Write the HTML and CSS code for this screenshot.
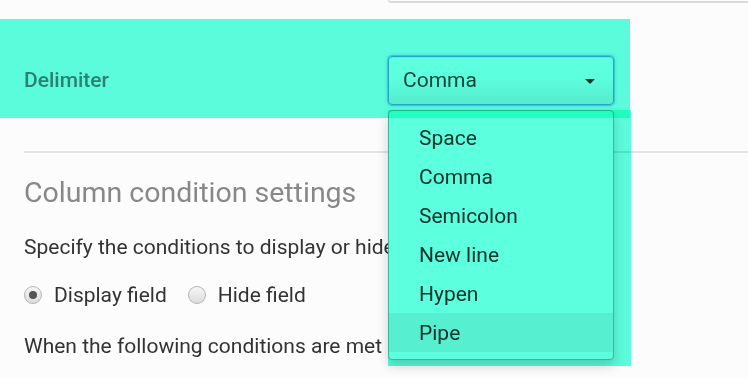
FILE: index.html
```html
<!DOCTYPE html>
<html lang="en">
<head>
<meta charset="utf-8">
<title>Delimiter settings</title>
<link rel="stylesheet" href="styles.css">
</head>
<body>
  <div class="prev-field-row"><div class="prev-field"></div></div>

  <div class="delimiter-row">
    <label class="field-label">Delimiter</label>
    <div class="select-wrap">
      <div class="select"><span class="select-value">Comma</span><span class="caret"></span></div>
      <ul class="menu">
        <li>Space</li>
        <li>Comma</li>
        <li>Semicolon</li>
        <li>New line</li>
        <li>Hypen</li>
        <li class="active">Pipe</li>
      </ul>
      <div class="menu-highlight"></div>
    </div>
  </div>

  <hr class="divider">

  <section class="conditions">
    <h2 class="section-title">Column condition settings</h2>
    <p class="text">Specify the conditions to display or hide</p>
    <div class="radio-group">
      <span class="radio-item"><span class="radio checked"></span>Display field</span>
      <span class="radio-item"><span class="radio"></span>Hide field</span>
    </div>
    <p class="text when">When the following conditions are met</p>
  </section>
</body>
</html>
```

FILE: styles.css
```css
html, body {
  margin: 0;
  padding: 0;
}
body {
  background: #fcfcfc;
  font-family: Roboto, "Liberation Sans", Arial, sans-serif;
  color: #333;
  width: 748px;
  height: 378px;
  overflow: hidden;
}

.prev-field-row {
  display: flex;
  padding-left: 388px;
}
.prev-field {
  flex: 1;
  height: 1px;
  border-left: 1px solid #dadada;
  border-bottom: 2px solid #dadada;
  border-bottom-left-radius: 4px;
}

.delimiter-row {
  position: relative;
  width: 630px;
  height: 99px;
  box-sizing: border-box;
  margin-top: 16px;
  padding: 37px 0 13px 24px;
  display: flex;
  align-items: flex-start;
  justify-content: space-between;
}
.delimiter-row::before {
  content: "";
  position: absolute;
  inset: 0;
  background: #5cffde;
  mix-blend-mode: multiply;
  z-index: 3;
  pointer-events: none;
}

.field-label {
  font-size: 21px;
  font-weight: 500;
  color: #7f7f7f;
  line-height: 49px;
}

.select-wrap {
  position: relative;
  width: 226px;
  margin-right: 16px;
}
.select {
  box-sizing: border-box;
  height: 49px;
  border: 1px solid #5aa8e6;
  border-radius: 4px;
  box-shadow: inset 0 1px 1px rgba(0,0,0,.075), 0 0 0 1px rgba(102,175,233,.55), 0 0 5px rgba(102,175,233,.5);
  background: linear-gradient(to bottom, #ffffff 45%, #ececec 100%);
  display: flex;
  align-items: center;
  justify-content: space-between;
  padding: 0 18px 0 14px;
}
.select-value {
  font-size: 21px;
  line-height: 47px;
  color: #444;
}
.caret {
  width: 0;
  height: 0;
  border-left: 5px solid transparent;
  border-right: 5px solid transparent;
  border-top: 5px solid #333;
  margin-top: 1px;
}

.menu {
  position: absolute;
  left: 0;
  top: 54px;
  width: 226px;
  box-sizing: border-box;
  margin: 0;
  padding: 7px 0;
  list-style: none;
  background: #fff;
  border: 1px solid #b3b3b3;
  border-radius: 4px;
  box-shadow: 0 6px 12px rgba(0,0,0,.175);
  z-index: 1;
}
.menu li {
  height: 39px;
  line-height: 41px;
  padding-left: 30px;
  font-size: 21px;
  color: #333;
}
.menu li.active {
  background: #efefef;
}
.menu-highlight {
  position: absolute;
  left: 0;
  top: 54px;
  width: 243px;
  height: 256px;
  background: #5cffde;
  mix-blend-mode: multiply;
  z-index: 2;
  pointer-events: none;
}

.divider {
  border: 0;
  height: 2px;
  background: #e3e3e3;
  margin: 33px 0 0 24px;
}

.conditions {
  padding-left: 24px;
}
.section-title {
  margin: 22px 0 0;
  font-size: 28.5px;
  font-weight: 400;
  line-height: 36px;
  color: #888;
}
.text {
  margin: 21px 0 0;
  font-size: 21px;
  line-height: 30px;
  color: #333;
  white-space: nowrap;
}
.radio-group {
  margin-top: 18px;
  height: 30px;
  display: flex;
  align-items: center;
  font-size: 21px;
  line-height: 30px;
  color: #333;
}
.radio-item {
  display: flex;
  align-items: center;
  margin-right: 21px;
}
.radio {
  box-sizing: border-box;
  width: 18px;
  height: 18px;
  border-radius: 50%;
  border: 1px solid #b5b5b5;
  background: linear-gradient(to bottom, #f6f6f6, #dcdcdc);
  margin-right: 12px;
  display: flex;
  align-items: center;
  justify-content: center;
}
.radio.checked::after {
  content: "";
  width: 8px;
  height: 8px;
  border-radius: 50%;
  background: #555;
}
.when {
  margin-top: 21px;
}
```
